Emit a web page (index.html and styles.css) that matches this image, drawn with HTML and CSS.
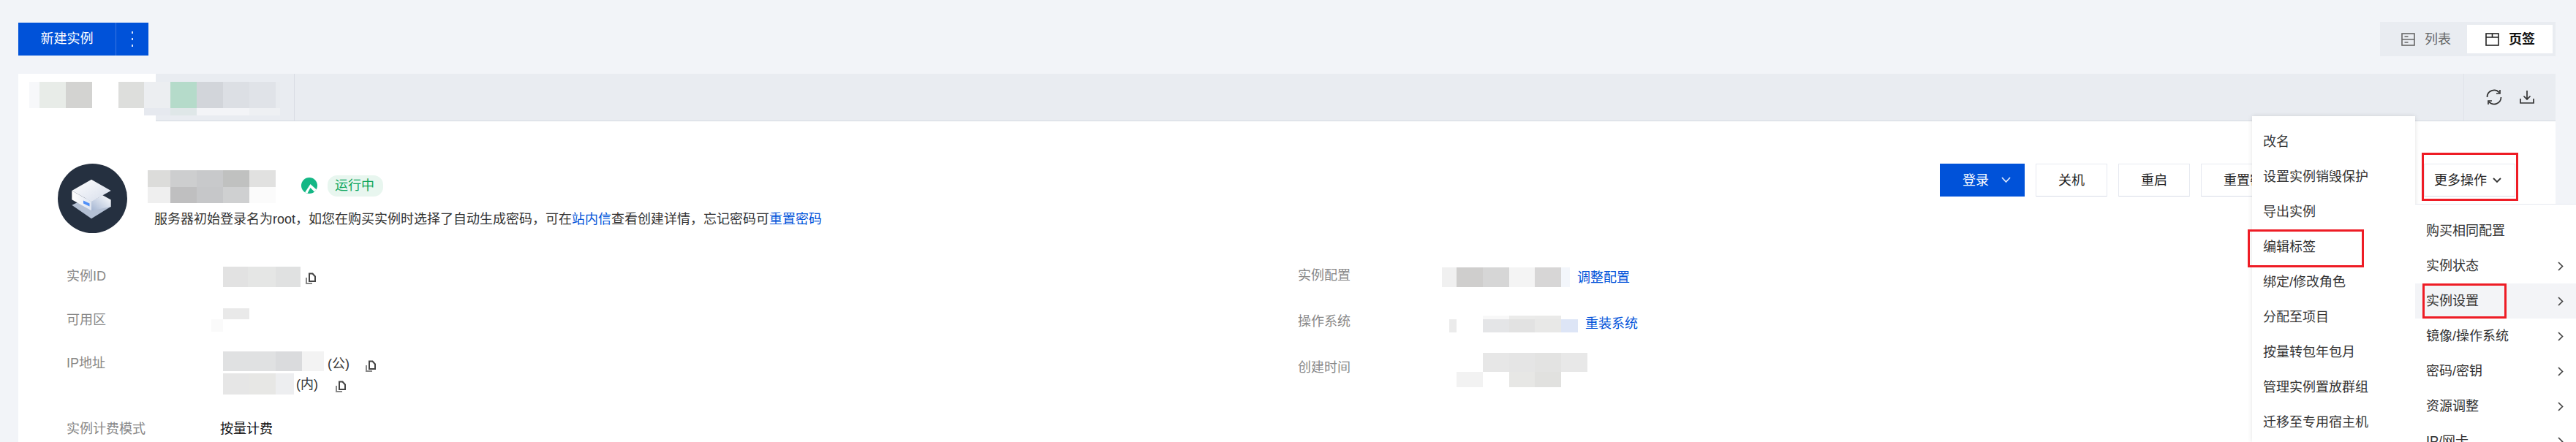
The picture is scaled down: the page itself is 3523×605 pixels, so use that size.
FILE: index.html
```html
<!DOCTYPE html>
<html lang="zh-CN">
<head>
<meta charset="UTF-8" />
<title>实例详情</title>
<link rel="stylesheet" href="styles.css">
</head>
<body>
  <div class="topbar">
    <div class="new-btn">
      <span class="new-label">新建实例</span>
      <span class="new-more"><i></i><i></i><i></i></span>
    </div>
    <div class="view-switch">
      <span class="view-item">
        <svg width="19" height="18" viewBox="0 0 19 18" fill="none" stroke="#666" stroke-width="1.6"><rect x="1" y="1" width="17" height="16"/><path d="M1 9h17M4.500 5h5M4.500 13h5"/></svg>
        列表
      </span>
      <span class="view-item active">
        <svg width="19" height="18" viewBox="0 0 19 18" fill="none" stroke="#222" stroke-width="1.6"><rect x="1" y="1" width="17" height="16"/><path d="M1 6h17M9.500 1v5"/></svg>
        页签
      </span>
    </div>
  </div>

  <div class="card">
    <div class="tabs">
      <div class="tab tab-active"></div>
      <div class="tab"></div>
      <div class="tab-tools">
        <svg width="22" height="22" viewBox="0 0 22 22" fill="none" stroke="#333" stroke-width="1.700"><path d="M1.500 11a9.500 9.500 0 0 1 16.500-6.400M20.500 11a9.500 9.500 0 0 1-16.500 6.400"/><path d="M19 1v5h-5M3 21v-5h5"/></svg>
        <svg width="20" height="20" viewBox="0 0 20 20" fill="none" stroke="#333" stroke-width="1.700"><path d="M1 12v6h18v-6M10 1v12M5.500 8.500l4.500 4.500 4.500-4.500"/></svg>
      </div>
      <svg class="tab-mosaic" width="343" height="46" shape-rendering="crispEdges">
        <rect x="0" y="0" width="14" height="36" fill="#f7f8fa"/>
        <rect x="14" y="0" width="36" height="36" fill="#e8ece8"/>
        <rect x="50" y="0" width="36" height="36" fill="#d3d3d1"/>
        <rect x="122" y="0" width="35" height="36" fill="#dddedc"/>
        <rect x="157" y="0" width="36" height="36" fill="#eceef1"/>
        <rect x="193" y="0" width="36" height="36" fill="#b5dbca"/>
        <rect x="229" y="0" width="36" height="36" fill="#d2d5da"/>
        <rect x="265" y="0" width="36" height="36" fill="#dcdfe4"/>
        <rect x="301" y="0" width="36" height="36" fill="#e0e3e8"/>
        <rect x="337" y="0" width="6" height="36" fill="#e8ebef"/>
        <rect x="157" y="36" width="36" height="10" fill="#e6e9ef"/>
        <rect x="193" y="36" width="36" height="10" fill="#dfe7e8"/>
        <rect x="229" y="36" width="72" height="10" fill="#f3f4f7"/>
        <rect x="301" y="36" width="42" height="10" fill="#eef0f3"/>
      </svg>
    </div>

    <div class="card-body">
      <div class="summary">
        <svg class="avatar" width="95" height="95" viewBox="0 0 95 95">
          <defs>
            <linearGradient id="topFace" x1="0" y1="0" x2="1" y2="1"><stop offset="0" stop-color="#fff"/><stop offset="1" stop-color="#d5dcea"/></linearGradient>
            <linearGradient id="sideFace" x1="0" y1="0" x2="1" y2="0"><stop offset="0" stop-color="#fff"/><stop offset="1" stop-color="#dfe5f0"/></linearGradient>
            <linearGradient id="backFace" x1="0" y1="1" x2="1" y2="0"><stop offset="0" stop-color="#a4b5d2"/><stop offset="1" stop-color="#fff"/></linearGradient>
          </defs>
          <circle cx="47.500" cy="47.500" r="47.500" fill="#253040"/>
          <path d="M19.300 56.700L46 75.300 72.700 58.700 46 44z" fill="#b4c0d4"/>
          <path d="M46 52L61 43 72.700 49.500V59L46 64.300z" fill="url(#backFace)"/>
          <path d="M19.300 37L46 52V64.300L19.300 49.300z" fill="url(#sideFace)"/>
          <path d="M46 21.700L72.700 37 46 52 19.300 37z" fill="url(#topFace)"/>
          <path d="M35 50.500L43.500 54.500V58.500L35 54.500z" fill="#4f8ff7"/>
        </svg>
        <div class="summary-text">
          <div class="name-row">
            <svg width="175" height="45" shape-rendering="crispEdges">
              <rect x="0" y="0" width="31" height="23" fill="#dcdcda"/>
              <rect x="31" y="0" width="36" height="23" fill="#cdcecf"/>
              <rect x="67" y="0" width="36" height="23" fill="#c8c9cb"/>
              <rect x="103" y="0" width="36" height="23" fill="#c0c1c0"/>
              <rect x="139" y="0" width="36" height="23" fill="#e1e1e0"/>
              <rect x="0" y="23" width="31" height="22" fill="#efefef"/>
              <rect x="31" y="23" width="36" height="22" fill="#bfbfc0"/>
              <rect x="67" y="23" width="36" height="22" fill="#c6c7c9"/>
              <rect x="103" y="23" width="36" height="22" fill="#cfd0d1"/>
              <rect x="139" y="23" width="36" height="22" fill="#fbfbfb"/>
            </svg>
            <svg class="os-icon" width="22" height="22" viewBox="0 0 22 22">
              <circle cx="11" cy="11" r="11" fill="#14b785"/>
              <path d="M5 20.500L12.500 9 20.800 16.500 18 19.500 12.500 14 8.500 21.500z" fill="#fff"/>
            </svg>
            <span class="status">运行中</span>
          </div>
          <p class="hint">服务器初始登录名为root，如您在购买实例时选择了自动生成密码，可在<a href="#">站内信</a>查看创建详情，忘记密码可<a href="#">重置密码</a></p>
        </div>
        <div class="actions">
          <span class="btn btn-primary">登录
            <svg width="13" height="9" viewBox="0 0 13 9" fill="none" stroke="#dbe6fb" stroke-width="1.800"><path d="M1 1l5.500 6L12 1"/></svg>
          </span>
          <span class="btn">关机</span>
          <span class="btn">重启</span>
          <span class="btn">重置密码</span>
          <span class="btn btn-more">更多操作
            <svg width="12" height="8" viewBox="0 0 12 8" fill="none" stroke="#333" stroke-width="1.800"><path d="M1 1l5 5 5-5"/></svg>
          </span>
        </div>
      </div>

      <div class="details">
        <div class="detail-col col-left">
          <div class="row row-id">
            <span class="label">实例ID</span>
            <div class="value">
              <svg width="106" height="28" shape-rendering="crispEdges">
                <rect width="34" height="28" fill="#e2e2e2"/>
                <rect x="34" width="38" height="28" fill="#e5e6e5"/>
                <rect x="72" width="34" height="28" fill="#e0e1e1"/>
              </svg>
              <svg class="copy" width="14" height="16" viewBox="0 0 14 16"><use href="#copyIcon"/></svg>
            </div>
          </div>
          <div class="row row-zone">
            <span class="label">可用区</span>
            <div class="value">
              <svg class="zone-mosaic" width="52" height="32" shape-rendering="crispEdges">
                <rect x="16" width="36" height="15" fill="#e9e9e9"/>
                <rect y="15" width="16" height="17" fill="#fafafa"/>
              </svg>
            </div>
          </div>
          <div class="row row-ip">
            <span class="label">IP地址</span>
            <div class="value value-stack">
              <div class="ip-line ip-public">
                <svg width="138" height="27" shape-rendering="crispEdges">
                  <rect width="72" height="27" fill="#e0e1e2"/>
                  <rect x="72" width="36" height="27" fill="#dadbdd"/>
                  <rect x="108" width="30" height="27" fill="#f3f3f3"/>
                </svg>
                <span class="ip-tag">(公)</span>
                <svg class="copy" width="14" height="16" viewBox="0 0 14 16"><use href="#copyIcon"/></svg>
              </div>
              <div class="ip-line ip-private">
                <svg width="97" height="29" shape-rendering="crispEdges">
                  <rect width="36" height="29" fill="#e6e6e6"/>
                  <rect x="36" width="36" height="29" fill="#e7e7e5"/>
                  <rect x="72" width="25" height="29" fill="#edeef0"/>
                </svg>
                <span class="ip-tag">(内)</span>
                <svg class="copy" width="14" height="16" viewBox="0 0 14 16"><use href="#copyIcon"/></svg>
              </div>
            </div>
          </div>
          <div class="row row-billing">
            <span class="label">实例计费模式</span>
            <span class="value value-text">按量计费</span>
          </div>
        </div>

        <div class="detail-col col-right">
          <div class="row row-config">
            <span class="label">实例配置</span>
            <div class="value value-link">
              <svg width="175" height="27" shape-rendering="crispEdges">
                <rect width="20" height="27" fill="#f0f0f0"/>
                <rect x="20" width="36" height="27" fill="#cfcecd"/>
                <rect x="56" width="36" height="27" fill="#d6d6d6"/>
                <rect x="92" width="35" height="27" fill="#f4f4f4"/>
                <rect x="127" width="36" height="27" fill="#d7d6d6"/>
                <rect x="163" width="12" height="27" fill="#f3f6fb"/>
              </svg>
              <a href="#">调整配置</a>
            </div>
          </div>
          <div class="row row-os">
            <span class="label">操作系统</span>
            <div class="value value-link">
              <svg width="186" height="23" shape-rendering="crispEdges">
                <rect x="10" y="5" width="10" height="18" fill="#ebebeb"/>
                <rect x="56" width="36" height="5" fill="#f8f8f8"/>
                <rect x="92" width="35" height="5" fill="#ebebea"/>
                <rect x="127" width="36" height="5" fill="#eaeae9"/>
                <rect x="56" y="5" width="36" height="18" fill="#e4e5e7"/>
                <rect x="92" y="5" width="35" height="18" fill="#e2e2e2"/>
                <rect x="127" y="5" width="36" height="18" fill="#e8e8e7"/>
                <rect x="163" y="5" width="23" height="18" fill="#dde5f6"/>
              </svg>
              <a href="#">重装系统</a>
            </div>
          </div>
          <div class="row row-created">
            <span class="label">创建时间</span>
            <div class="value">
              <svg width="199" height="47" shape-rendering="crispEdges">
                <rect x="56" width="36" height="26" fill="#e7e7e7"/>
                <rect x="92" width="35" height="26" fill="#e5e5e5"/>
                <rect x="127" width="36" height="26" fill="#e3e3e2"/>
                <rect x="163" width="36" height="26" fill="#e8e8e8"/>
                <rect x="20" y="26" width="36" height="21" fill="#f2f2f2"/>
                <rect x="92" y="26" width="35" height="21" fill="#e7e7e5"/>
                <rect x="127" y="26" width="36" height="21" fill="#e1e1df"/>
              </svg>
            </div>
          </div>
        </div>
      </div>
    </div>
  </div>

  <ul class="menu menu-more">
    <li>改名</li>
    <li>设置实例销毁保护</li>
    <li>导出实例</li>
    <li>编辑标签</li>
    <li>绑定/修改角色</li>
    <li>分配至项目</li>
    <li>按量转包年包月</li>
    <li>管理实例置放群组</li>
    <li>迁移至专用宿主机</li>
  </ul>

  <ul class="menu menu-main">
    <li>购买相同配置</li>
    <li class="has-sub">实例状态<svg width="8" height="13" viewBox="0 0 8 13"><use href="#chevronIcon"/></svg></li>
    <li class="has-sub hover">实例设置<svg width="8" height="13" viewBox="0 0 8 13"><use href="#chevronIcon"/></svg></li>
    <li class="has-sub">镜像/操作系统<svg width="8" height="13" viewBox="0 0 8 13"><use href="#chevronIcon"/></svg></li>
    <li class="has-sub">密码/密钥<svg width="8" height="13" viewBox="0 0 8 13"><use href="#chevronIcon"/></svg></li>
    <li class="has-sub">资源调整<svg width="8" height="13" viewBox="0 0 8 13"><use href="#chevronIcon"/></svg></li>
    <li class="has-sub">IP/网卡<svg width="8" height="13" viewBox="0 0 8 13"><use href="#chevronIcon"/></svg></li>
  </ul>

  <!-- красные рамки поверх скриншота -->
  <div class="frame frame-more"></div>
  <div class="frame frame-tag"></div>
  <div class="frame frame-setting"></div>

  <svg class="icon-defs" width="0" height="0">
    <symbol id="copyIcon" viewBox="0 0 14 16">
      <path d="M1 7v8h8" fill="none" stroke="#888" stroke-width="2"/>
      <path d="M5 1.500V12h8V5.500L9.500 1.500z" fill="#fff" stroke="#444" stroke-width="2"/>
    </symbol>
    <symbol id="chevronIcon" viewBox="0 0 8 13">
      <path d="M1 1l5.500 5.500L1 12" fill="none" stroke="#444" stroke-width="1.700"/>
    </symbol>
  </svg>
</body>
</html>
```

FILE: styles.css
```css
html, body {
  margin: 0;
  padding: 0;
  height: 100%;
  overflow: hidden;
}
body {
  position: relative;
  background: #f2f4f8;
  font-family: "Liberation Sans", "Noto Sans CJK SC", sans-serif;
  font-size: 18px;
  line-height: 28px;
  color: #222;
}
a {
  color: #0052d9;
  text-decoration: none;
}

/* верхняя полоса */
.topbar {
  display: flex;
  justify-content: space-between;
  height: 101px;
  padding: 30px 28px 0 25px;
  box-sizing: border-box;
}
.new-btn {
  display: flex;
  height: 45px;
  margin-top: 1px;
  background: #0052d9;
  color: #fff;
}
.new-label {
  width: 133px;
  line-height: 45px;
  text-align: center;
}
.new-more {
  width: 44px;
  border-left: 1px solid #3a77e2;
  display: flex;
  flex-direction: column;
  align-items: center;
  justify-content: center;
  gap: 6px;
}
.new-more i {
  width: 2px;
  height: 3px;
  background: #dbe6fb;
}
.view-switch {
  display: flex;
  justify-content: flex-end;
  width: 240px;
  height: 47px;
  padding: 4px;
  box-sizing: border-box;
  background: #e9ecf1;
}
.view-item {
  display: flex;
  align-items: center;
  gap: 13px;
  width: 115px;
  padding-left: 25px;
  box-sizing: border-box;
  color: #666;
}
.view-item.active {
  width: 117px;
  background: #fff;
  color: #111;
  font-weight: bold;
}

/* карточка */
.card {
  margin: 0 28px 0 25px;
  height: 504px;
  background: #fff;
}
.tabs {
  position: relative;
  display: flex;
  height: 65px;
  background: #e9ecf1;
  border-bottom: 1px solid #d5d9e1;
  box-sizing: border-box;
}
.tab {
  width: 190px;
  border-right: 1px solid #d8dce3;
  box-sizing: border-box;
}
.tab-active {
  width: 188px;
  height: 65px;
  background: #fff;
  border-right: 0;
}
.tab-tools {
  display: flex;
  align-items: center;
  gap: 24px;
  margin-left: auto;
  width: 126px;
  padding-left: 30px;
  box-sizing: border-box;
  border-left: 1px solid #e0e3e9;
}
.tab-mosaic {
  position: absolute;
  left: 15px;
  top: 11px;
}
.card-body {
  padding: 58px 55px 0 54px;
}

.summary {
  display: flex;
  align-items: flex-start;
}
.avatar {
  flex: none;
  margin-right: 28px;
}
.summary-text {
  padding-top: 9px;
}
.name-row {
  display: flex;
  align-items: center;
}
.os-icon {
  margin-left: 35px;
  margin-top: -3px;
}
.status {
  margin-left: 14px;
  margin-top: -3px;
  padding: 0 12px 0 10px;
  background: #e8f6ef;
  border-radius: 13px;
  color: #0aa55b;
  line-height: 29px;
}
.hint {
  margin: 8px 0 0 9px;
  white-space: nowrap;
  color: #333;
}

.actions {
  display: flex;
  gap: 15px;
  margin-left: auto;
}
.btn {
  display: flex;
  align-items: center;
  justify-content: center;
  height: 45px;
  padding: 0 30px;
  box-sizing: border-box;
  background: #fff;
  border: 1px solid #e6e9f0;
  border-bottom-color: #d8dce6;
  white-space: nowrap;
}
.btn-primary {
  gap: 17px;
  width: 116px;
  padding: 0 18px 0 31px;
  justify-content: flex-start;
  background: #0052d9;
  border: 0;
  color: #fff;
}
.btn-more {
  gap: 8px;
  width: 125px;
  margin-left: 156px;
  padding: 0 18px 0 13px;
}

/* детали */
.details {
  display: flex;
  margin-top: 46px;
  padding-left: 12px;
}
.detail-col {
  display: flex;
  flex-direction: column;
}
.col-left {
  width: 1684px;
}
.col-right {
  padding-top: 1px;
}
.row {
  display: flex;
  align-items: flex-start;
}
.label {
  color: #888;
}
.col-left .label {
  width: 214px;
}
.col-right .label {
  width: 197px;
}
.value {
  display: flex;
  align-items: center;
}
.value svg {
  display: block;
}
.copy {
  margin-left: 7px;
  margin-top: 4px;
}
.row-id .label {
  margin-top: -1px;
}
.row-zone {
  margin-top: 29px;
}
.row-zone .label {
  margin-top: 2px;
}
.zone-mosaic {
  margin-left: -16px;
}
.row-ip {
  margin-top: 27px;
}
.row-ip .label {
  margin-top: 2px;
}
.value-stack {
  flex-direction: column;
  align-items: flex-start;
}
.ip-line {
  display: flex;
  align-items: flex-start;
}
.ip-private {
  margin-top: 2px;
}
.ip-tag {
  margin-left: 3px;
  margin-right: 17px;
  margin-top: 5px;
  line-height: 20px;
  color: #333;
}
.ip-public .ip-tag {
  margin-left: 5px;
  margin-top: 7px;
  margin-right: 15px;
}
.ip-public .copy {
  margin-top: 12px;
}
.ip-private .copy {
  margin-top: 10px;
}
.row-billing {
  margin-top: 33px;
}
.value-text {
  margin-left: -4px;
  color: #111;
}
.value-link {
  align-items: flex-start;
}
.value-link a {
  margin-left: 10px;
}
.row-config .label {
  margin-top: -3px;
}
.row-os {
  margin-top: 35px;
}
.row-os .label {
  margin-top: -3px;
}
.row-os .value svg {
  margin-top: 3px;
}
.row-created {
  margin-top: 26px;
}
.row-created .label {
  margin-top: 6px;
}

/* выпадающие меню */
.menu {
  position: absolute;
  margin: 0;
  padding: 0;
  list-style: none;
  background: #fff;
  color: #333;
}
.menu li {
  height: 48px;
  line-height: 48px;
}
.menu-more {
  left: 3080px;
  top: 159px;
  bottom: 0;
  width: 223px;
  padding: 11px 0 0 15px;
  box-sizing: border-box;
  box-shadow: 0 0 6px rgba(0, 0, 0, 0.12);
}
.menu-main {
  left: 3303px;
  top: 279px;
  right: 0;
  bottom: 0;
  padding-top: 12px;
  border-top: 1px solid #e6e9f0;
  box-sizing: border-box;
  overflow: hidden;
}
.menu-main li {
  display: flex;
  align-items: center;
  justify-content: space-between;
  padding: 0 17px 0 15px;
}
.menu-main li.hover {
  background: #f3f4f7;
}

.frame {
  position: absolute;
  box-sizing: border-box;
  border: 3px solid #ee1c25;
}
.frame-more {
  left: 3312px;
  top: 209px;
  width: 132px;
  height: 66px;
}
.frame-tag {
  left: 3074px;
  top: 314px;
  width: 159px;
  height: 52px;
}
.frame-setting {
  left: 3313px;
  top: 388px;
  width: 115px;
  height: 48px;
}
.icon-defs {
  position: absolute;
}
```
